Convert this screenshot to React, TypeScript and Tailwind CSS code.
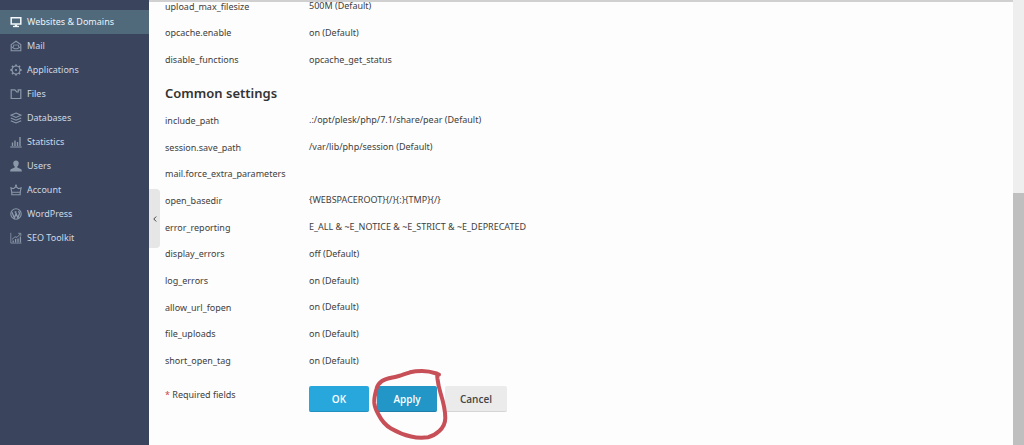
import type { ReactNode } from "react";

interface NavItem {
  label: string;
  icon: ReactNode;
  active?: boolean;
}

interface Setting {
  name: string;
  value: string;
}

const NAV_ITEMS: NavItem[] = [
  {
    label: "Websites & Domains",
    active: true,
    icon: (
      <>
        <path d="M1.2 1.7h9.600v6.300H1.200z" strokeWidth="1.500" />
        <path d="M3 10.500h6" strokeWidth="1.300" />
        <path d="M6 8.500v2" strokeWidth="2.400" />
      </>
    ),
  },
  {
    label: "Mail",
    icon: (
      <>
        <path d="M1.200 4.600 6 1.200l4.800 3.400v6.200H1.200z" />
        <path d="M1.500 6.600 4.500 8.800h3l3-2.200" />
        <path d="M3.500 7V5h5v2" strokeWidth=".8" />
      </>
    ),
  },
  {
    label: "Applications",
    icon: (
      <>
        <circle cx="6" cy="6" r="4" strokeWidth="1.200" />
        <circle cx="6" cy="6" r="1.100" fill="currentColor" stroke="none" />
        <path
          d="M6 .4v1.600M6 10v1.600M.4 6H2M10 6h1.600M2 2l1.100 1.100M8.900 8.900 10 10M2 10l1.100-1.100M8.900 3.100 10 2"
          strokeWidth="1.800"
        />
      </>
    ),
  },
  {
    label: "Files",
    icon: <path d="M1.200 1.800h3.600l2 2.200h1.400V1.800h2.600v8.700H1.200z" strokeWidth="1.200" />,
  },
  {
    label: "Databases",
    icon: (
      <>
        <path d="M6 1 11 3.200 6 5.400 1 3.200z" />
        <path d="M.8 5.900 6 8.200l5.200-2.300" />
        <path d="M.8 8.700 6 11l5.200-2.300" />
      </>
    ),
  },
  {
    label: "Statistics",
    icon: (
      <>
        <path d="M.3 11h11.400" />
        <path d="M2.500 10V6.500M5 10V4.500M7.500 10V6M10 10V1" strokeWidth="1.400" />
      </>
    ),
  },
  {
    label: "Users",
    icon: (
      <path
        d="M6 .4C4 .4 3.100 1.700 3.300 3.500 3.400 4.900 3.900 6 4.700 6.600v1L1.300 8.900C.5 9.200.2 9.900.2 11.400h11.600c0-1.500-.3-2.200-1.100-2.500L7.300 7.600v-1c.8-.6 1.300-1.700 1.400-3.100C8.900 1.700 8 .4 6 .4z"
        fill="currentColor"
        stroke="none"
      />
    ),
  },
  {
    label: "Account",
    icon: (
      <>
        <path d="M1.800 8.200.9 3.900l2.600.8L6 2.500l2.500 2.200 2.600-.8-.9 4.300z" />
        <path d="M1.800 8.200v2.600h8.400V8.200" />
        <circle cx="6" cy="1.500" r="1" fill="currentColor" stroke="none" />
      </>
    ),
  },
  {
    label: "WordPress",
    icon: (
      <>
        <circle cx="6" cy="6" r="5.200" />
        <path
          d="M2 4.200 4.400 10 6 5.600 5.300 4M4.600 4h1.800M6 5.200 7.900 10l1.500-4.300c.3-1-.9-1.500-.7-2.500"
          strokeWidth="1.300"
        />
      </>
    ),
  },
  {
    label: "SEO Toolkit",
    icon: (
      <>
        <path d="M.8.800V11.100h10.700" strokeWidth=".8" />
        <path d="M3.200 10.500V8.500M5.600 10.500V7M8 10.500V6.500M10.400 10.500V4.500" strokeWidth="1.300" />
        <path d="M2 7.400 5 4.800l2 .6 3.500-3.700M8.200 1.300h2.600v2.600" strokeWidth=".9" />
      </>
    ),
  },
];

const PERFORMANCE_SETTINGS: Setting[] = [
  { name: "upload_max_filesize", value: "500M (Default)" },
  { name: "opcache.enable", value: "on (Default)" },
  { name: "disable_functions", value: "opcache_get_status" },
];

const COMMON_SETTINGS: Setting[] = [
  { name: "include_path", value: ".:/opt/plesk/php/7.1/share/pear (Default)" },
  { name: "session.save_path", value: "/var/lib/php/session (Default)" },
  { name: "mail.force_extra_parameters", value: "" },
  { name: "open_basedir", value: "{WEBSPACEROOT}{/}{:}{TMP}{/}" },
  { name: "error_reporting", value: "E_ALL & ~E_NOTICE & ~E_STRICT & ~E_DEPRECATED" },
  { name: "display_errors", value: "off (Default)" },
  { name: "log_errors", value: "on (Default)" },
  { name: "allow_url_fopen", value: "on (Default)" },
  { name: "file_uploads", value: "on (Default)" },
  { name: "short_open_tag", value: "on (Default)" },
];

function SettingRow({ name, value }: Setting) {
  return (
    <div className="flex items-center">
      <dt className="w-36 shrink-0 pt-px">{name}</dt>
      <dd>{value}</dd>
    </div>
  );
}

export default function App() {
  return (
    <div className="flex min-h-screen bg-[#fdfdfd] font-['Noto_Sans','Open_Sans',sans-serif] text-[9px] leading-4 text-[#404040]">
      {/* Sidebar */}
      <aside className="w-[149px] shrink-0 bg-[#3a455d] pt-[10px]">
        <nav>
          {NAV_ITEMS.map((item) => (
            <a
              key={item.label}
              href="#"
              aria-current={item.active ? "page" : undefined}
              className={`flex h-6 items-center gap-[5px] pl-[10px] ${
                item.active ? "bg-[#50697b] text-[#eaf3f8]" : "text-[#cdd7e4]"
              }`}
            >
              <svg
                viewBox="0 0 12 12"
                className={`size-3 shrink-0 ${item.active ? "text-[#f4fafc]" : "text-[#8b98aa]"}`}
                fill="none"
                stroke="currentColor"
                strokeWidth="1.100"
                aria-hidden="true"
              >
                {item.icon}
              </svg>
              {item.label}
            </a>
          ))}
        </nav>
      </aside>

      {/* Content */}
      <main className="relative min-w-0 flex-1 border-t-2 border-[#d0d0d0] pl-4">
        <button
          type="button"
          aria-label="Collapse sidebar"
          className="absolute top-[187px] left-0 flex h-[59px] w-[11px] items-center justify-center rounded-r-sm bg-[#e6e6e6] text-[#444]"
        >
          <svg viewBox="0 0 6 8" className="h-2 w-1.5" fill="none" stroke="currentColor" aria-hidden="true">
            <path d="M4.200 1.500 1.800 4l2.400 2.500" />
          </svg>
        </button>

        <dl className="-mt-[9px] grid min-h-[80px] auto-rows-fr">
          {PERFORMANCE_SETTINGS.map((s) => (
            <SettingRow key={s.name} {...s} />
          ))}
        </dl>

        <h2 className="mt-[10px] text-[13px] leading-5 font-semibold text-[#333]">Common settings</h2>

        <dl className="mt-1 grid min-h-[267px] auto-rows-fr">
          {COMMON_SETTINGS.map((s) => (
            <SettingRow key={s.name} {...s} />
          ))}
        </dl>

        <div className="mt-3 flex">
          <p className="w-36 shrink-0 pt-px">
            <span className="text-[#d0454c]">*</span> Required fields
          </p>
          <div className="flex gap-2 font-['Open_Sans',sans-serif] text-[10px] font-semibold">
            <button type="button" className="h-[26px] w-[60px] rounded-xs border-b border-[#2391c0] bg-[#28a7dc] text-white">
              OK
            </button>
            <div className="relative">
              <button type="button" className="h-[26px] w-[60px] rounded-xs border-b border-[#1d7fa9] bg-[#2296c6] text-white">
                Apply
              </button>
              {/* Hand-drawn ring */}
              <svg
                viewBox="0 0 80 76"
                className="pointer-events-none absolute -top-5 -left-[7px] h-[76px] w-20 max-w-none"
                fill="none"
                stroke="#c74f57"
                strokeWidth="4"
                strokeLinecap="round"
                strokeLinejoin="round"
                aria-hidden="true"
              >
                <path d="M69 8.500 66.500 7.500C62 6 57 5 52 5c-4 0-8 .3-12 1.300C35 8 31 9.500 27 10.500 21 12 16 12.500 12 15 8 17.500 7.300 20 6.500 23 5 28 4 33 4.300 37c.4 4 2.200 8 4.200 11.500C11 53.500 15 59 21 62.500 27 66 34 69 41 70.500c6 1.500 12 1.500 17 .8 5-1 8-3.300 11-6 4-3.500 6.300-8 6.300-13.300 0-8-2.300-17-4.800-25C69 22 68 17 67.500 13L67 7.500" />
              </svg>
            </div>
            <button type="button" className="h-[26px] w-[62px] rounded-xs border-b border-[#d5d5d5] bg-[#ebebeb] text-[#444]">
              Cancel
            </button>
          </div>
        </div>
      </main>

      {/* Scrollbar track */}
      <div className="flex w-[11px] shrink-0 flex-col bg-[#eeeeee] pt-[193px]">
        <div className="flex-1 bg-[#bfbfbf]" />
      </div>
    </div>
  );
}
